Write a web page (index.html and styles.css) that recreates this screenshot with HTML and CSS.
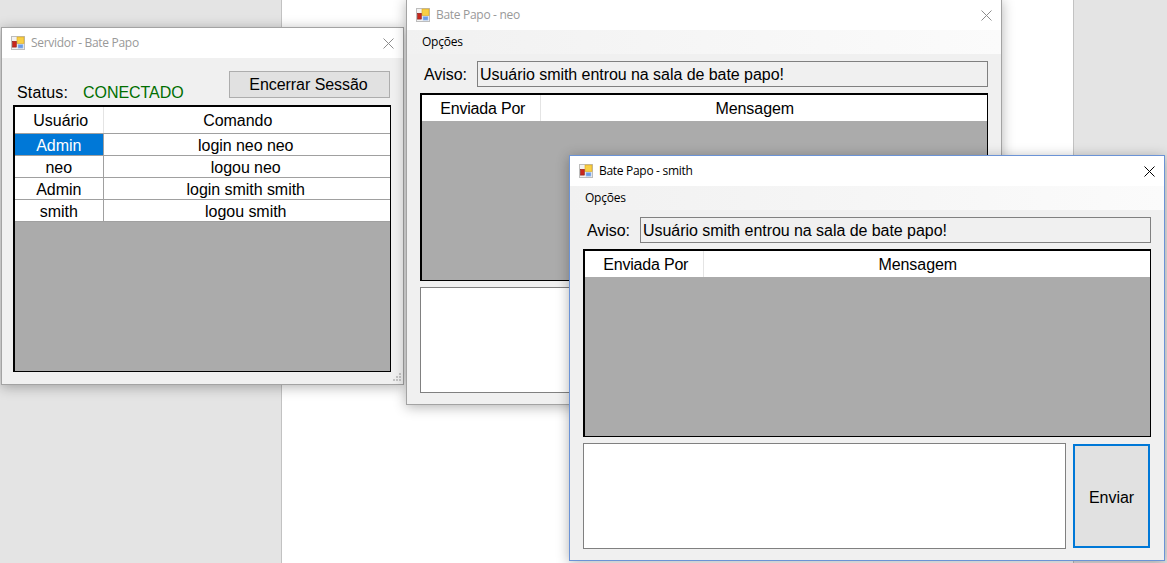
FILE: index.html
```html
<!DOCTYPE html>
<html lang="pt-BR">
<head>
    <meta charset="UTF-8">
    <meta name="viewport" content="width=device-width, initial-scale=1.0">
    <title>Bate Papo</title>
    <link rel="stylesheet" href="styles.css">
</head>
<body>
    <svg class="defs" width="0" height="0">
        <symbol id="app-icon" viewBox="0 0 14 14">
            <rect x="0.5" y="0.5" width="13" height="13" fill="#f2f2f2" stroke="#bdbdbd"/>
            <rect x="6" y="1" width="7" height="6.5" fill="#f8cf45" stroke="#d9a520" stroke-width="0.6"/>
            <rect x="1.5" y="5.3" width="3.8" height="5.8" fill="#c9271d" stroke="#8c1c15" stroke-width="0.6"/>
            <rect x="7" y="8.5" width="5" height="3.6" fill="#6a9be6" stroke="#a6c3ee" stroke-width="0.6"/>
        </symbol>
        <symbol id="close-icon" viewBox="0 0 11 11">
            <path d="M0.5 0.5L10.5 10.5M10.5 0.5L0.5 10.5" fill="none" stroke="currentColor" stroke-width="1"/>
        </symbol>
    </svg>

    <div class="desktop">
        <div class="page"></div>
    </div>

    <!-- janela do servidor -->
    <div class="window server-window">
        <div class="titlebar">
            <svg class="app-icon"><use href="#app-icon"/></svg>
            <span class="title">Servidor - Bate Papo</span>
            <svg class="close"><use href="#close-icon"/></svg>
        </div>
        <div class="content">
            <div class="status-row">
                <span class="status-label">Status:</span>
                <span class="status-value">CONECTADO</span>
                <button class="btn end-session" type="button">Encerrar Sessão</button>
            </div>
            <div class="grid server-grid">
                <table>
                    <thead>
                        <tr><th class="col-user">Usuário</th><th>Comando</th></tr>
                    </thead>
                    <tbody>
                        <tr><td class="selected">Admin</td><td>login neo neo</td></tr>
                        <tr><td>neo</td><td>logou neo</td></tr>
                        <tr><td>Admin</td><td>login smith smith</td></tr>
                        <tr><td>smith</td><td>logou smith</td></tr>
                    </tbody>
                </table>
            </div>
        </div>
        <svg class="grip" width="10" height="10" viewBox="0 0 10 10">
            <rect x="7" y="0" width="2" height="2"/>
            <rect x="4" y="3" width="2" height="2"/>
            <rect x="7" y="3" width="2" height="2"/>
            <rect x="1" y="6" width="2" height="2"/>
            <rect x="4" y="6" width="2" height="2"/>
            <rect x="7" y="6" width="2" height="2"/>
        </svg>
    </div>

    <!-- cliente neo -->
    <div class="window chat-window neo-window">
        <div class="titlebar">
            <svg class="app-icon"><use href="#app-icon"/></svg>
            <span class="title">Bate Papo - neo</span>
            <svg class="close"><use href="#close-icon"/></svg>
        </div>
        <div class="menu"><span>Opções</span></div>
        <div class="content">
            <div class="notice-row">
                <span class="notice-label">Aviso:</span>
                <div class="notice-box">Usuário smith entrou na sala de bate papo!</div>
            </div>
            <div class="grid chat-grid">
                <table>
                    <thead>
                        <tr><th class="col-sender">Enviada Por</th><th>Mensagem</th></tr>
                    </thead>
                </table>
            </div>
            <div class="send-row">
                <div class="message-box"></div>
                <button class="btn send" type="button">Enviar</button>
            </div>
        </div>
    </div>

    <!-- cliente smith, janela ativa -->
    <div class="window chat-window smith-window active">
        <div class="titlebar">
            <svg class="app-icon"><use href="#app-icon"/></svg>
            <span class="title">Bate Papo - smith</span>
            <svg class="close"><use href="#close-icon"/></svg>
        </div>
        <div class="menu"><span>Opções</span></div>
        <div class="content">
            <div class="notice-row">
                <span class="notice-label">Aviso:</span>
                <div class="notice-box">Usuário smith entrou na sala de bate papo!</div>
            </div>
            <div class="grid chat-grid">
                <table>
                    <thead>
                        <tr><th class="col-sender">Enviada Por</th><th>Mensagem</th></tr>
                    </thead>
                </table>
            </div>
            <div class="send-row">
                <div class="message-box"></div>
                <button class="btn send" type="button">Enviar</button>
            </div>
        </div>
    </div>
</body>
</html>
```

FILE: styles.css
```css
* {
    box-sizing: border-box;
    margin: 0;
    padding: 0;
}

html, body {
    height: 100%;
    overflow: hidden;
}

body {
    position: relative;
    background-color: #e4e4e4;
    font-family: 'Liberation Sans', Arial, sans-serif;
    font-size: 16px;
    letter-spacing: -0.05px;
    color: #000;
}

.defs {
    position: absolute;
}

.desktop {
    height: 100%;
    padding-left: 281px;
}

.page {
    width: 793px;
    height: 100%;
    background-color: #fff;
    border-left: 1px solid #c2c2c2;
    border-right: 1px solid #c2c2c2;
}

/* janelas */
.window {
    position: absolute;
    display: flex;
    flex-direction: column;
    background-color: #f0f0f0;
    border: 1px solid #a3a3a3;
    box-shadow: 0 2px 12px rgba(0, 0, 0, 0.3);
}

.server-window {
    left: 1px;
    top: 27px;
    width: 403px;
    height: 358px;
}

.chat-window {
    width: 596px;
    height: 406px;
}

.neo-window {
    left: 406px;
    top: -1px;
}

.smith-window {
    left: 569px;
    top: 155px;
}

.window.active {
    border-color: #6b93d6;
}

.titlebar {
    display: flex;
    align-items: center;
    flex: none;
    height: 30px;
    padding: 0 9px 0 9px;
    background-color: #fff;
}

.app-icon {
    flex: none;
    width: 14px;
    height: 14px;
    margin-right: 6px;
}

.title {
    flex: 1;
    margin-top: -2px;
    font-family: 'Open Sans', sans-serif;
    font-size: 12px;
    letter-spacing: -0.3px;
    color: #999;
}

.close {
    flex: none;
    width: 11px;
    height: 11px;
    color: #8c8c8c;
}

.active .title {
    color: #000;
}

.active .close {
    color: #000;
}

.menu {
    flex: none;
    height: 24px;
    padding-left: 15px;
    line-height: 24px;
    font-family: 'Open Sans', sans-serif;
    font-size: 12px;
    letter-spacing: -0.25px;
    background: linear-gradient(to right, #f1f1f1, #fbfbfb);
}

.content {
    flex: 1;
    display: flex;
    flex-direction: column;
    min-height: 0;
}

.server-window .content {
    padding: 13px 13px 12px 11px;
}

.chat-window .content {
    padding: 7px 13px 11px 13px;
}

/* servidor */
.status-row {
    display: flex;
    align-items: flex-end;
    height: 27px;
    padding-left: 4px;
    margin-bottom: 7px;
}

.status-label {
    width: 66px;
    line-height: 18px;
    margin-bottom: -4px;
    letter-spacing: 0.2px;
}

.status-value {
    flex: 1;
    line-height: 18px;
    margin-bottom: -4px;
    color: #006e00;
}

.btn {
    font-family: 'Liberation Sans', Arial, sans-serif;
    font-size: 16px;
    letter-spacing: -0.05px;
    color: #000;
    background-color: #e1e1e1;
    border: 1px solid #adadad;
}

.end-session {
    width: 161px;
    height: 27px;
    padding-right: 2px;
}

/* grades */
.grid {
    background-color: #ababab;
    border-style: solid;
    border-color: #000;
    border-width: 2px 1px 1px 2px;
}

.server-grid {
    flex: 1;
    margin-right: -1px;
}

.chat-grid {
    height: 188px;
    margin-top: 6px;
}

table {
    width: 100%;
    border-collapse: collapse;
    table-layout: fixed;
    background-color: #fff;
}

th {
    height: 26px;
    padding: 2px 0 0 4px;
    font-weight: normal;
    text-align: center;
    border-right: 1px solid #e4e4e4;
    border-bottom: 1px solid #a0a0a0;
}

th:last-child {
    padding: 2px 18px 0 0;
    border-right: none;
}

td {
    height: 22px;
    padding: 4px 0 0;
    line-height: 16px;
    text-align: center;
    border-right: 1px solid #a0a0a0;
    border-bottom: 1px solid #a0a0a0;
}

td:last-child {
    padding-right: 2px;
    border-right: none;
}

.col-user {
    width: 88px;
}

.col-sender {
    width: 118px;
    letter-spacing: -0.2px;
}

.chat-grid th {
    border-bottom: none;
}

td.selected {
    background-color: #0078d7;
    color: #fff;
}

/* aviso */
.notice-row {
    display: flex;
    align-items: center;
    height: 26px;
    padding-left: 4px;
}

.notice-label {
    width: 53px;
    padding-top: 2px;
}

.notice-box {
    flex: 1;
    height: 26px;
    padding-left: 2px;
    line-height: 25px;
    border: 1px solid #808080;
    background-color: #f0f0f0;
}

/* envio */
.send-row {
    display: flex;
    align-items: center;
    gap: 7px;
    height: 106px;
    margin-top: 6px;
}

.message-box {
    width: 483px;
    height: 106px;
    background-color: #fff;
    border: 1px solid #808080;
}

.send {
    width: 77px;
    height: 104px;
    padding-top: 3px;
    border: 2px solid #0078d7;
}

.grip {
    position: absolute;
    right: 1px;
    bottom: 1px;
    fill: #c4c4c4;
}
```
